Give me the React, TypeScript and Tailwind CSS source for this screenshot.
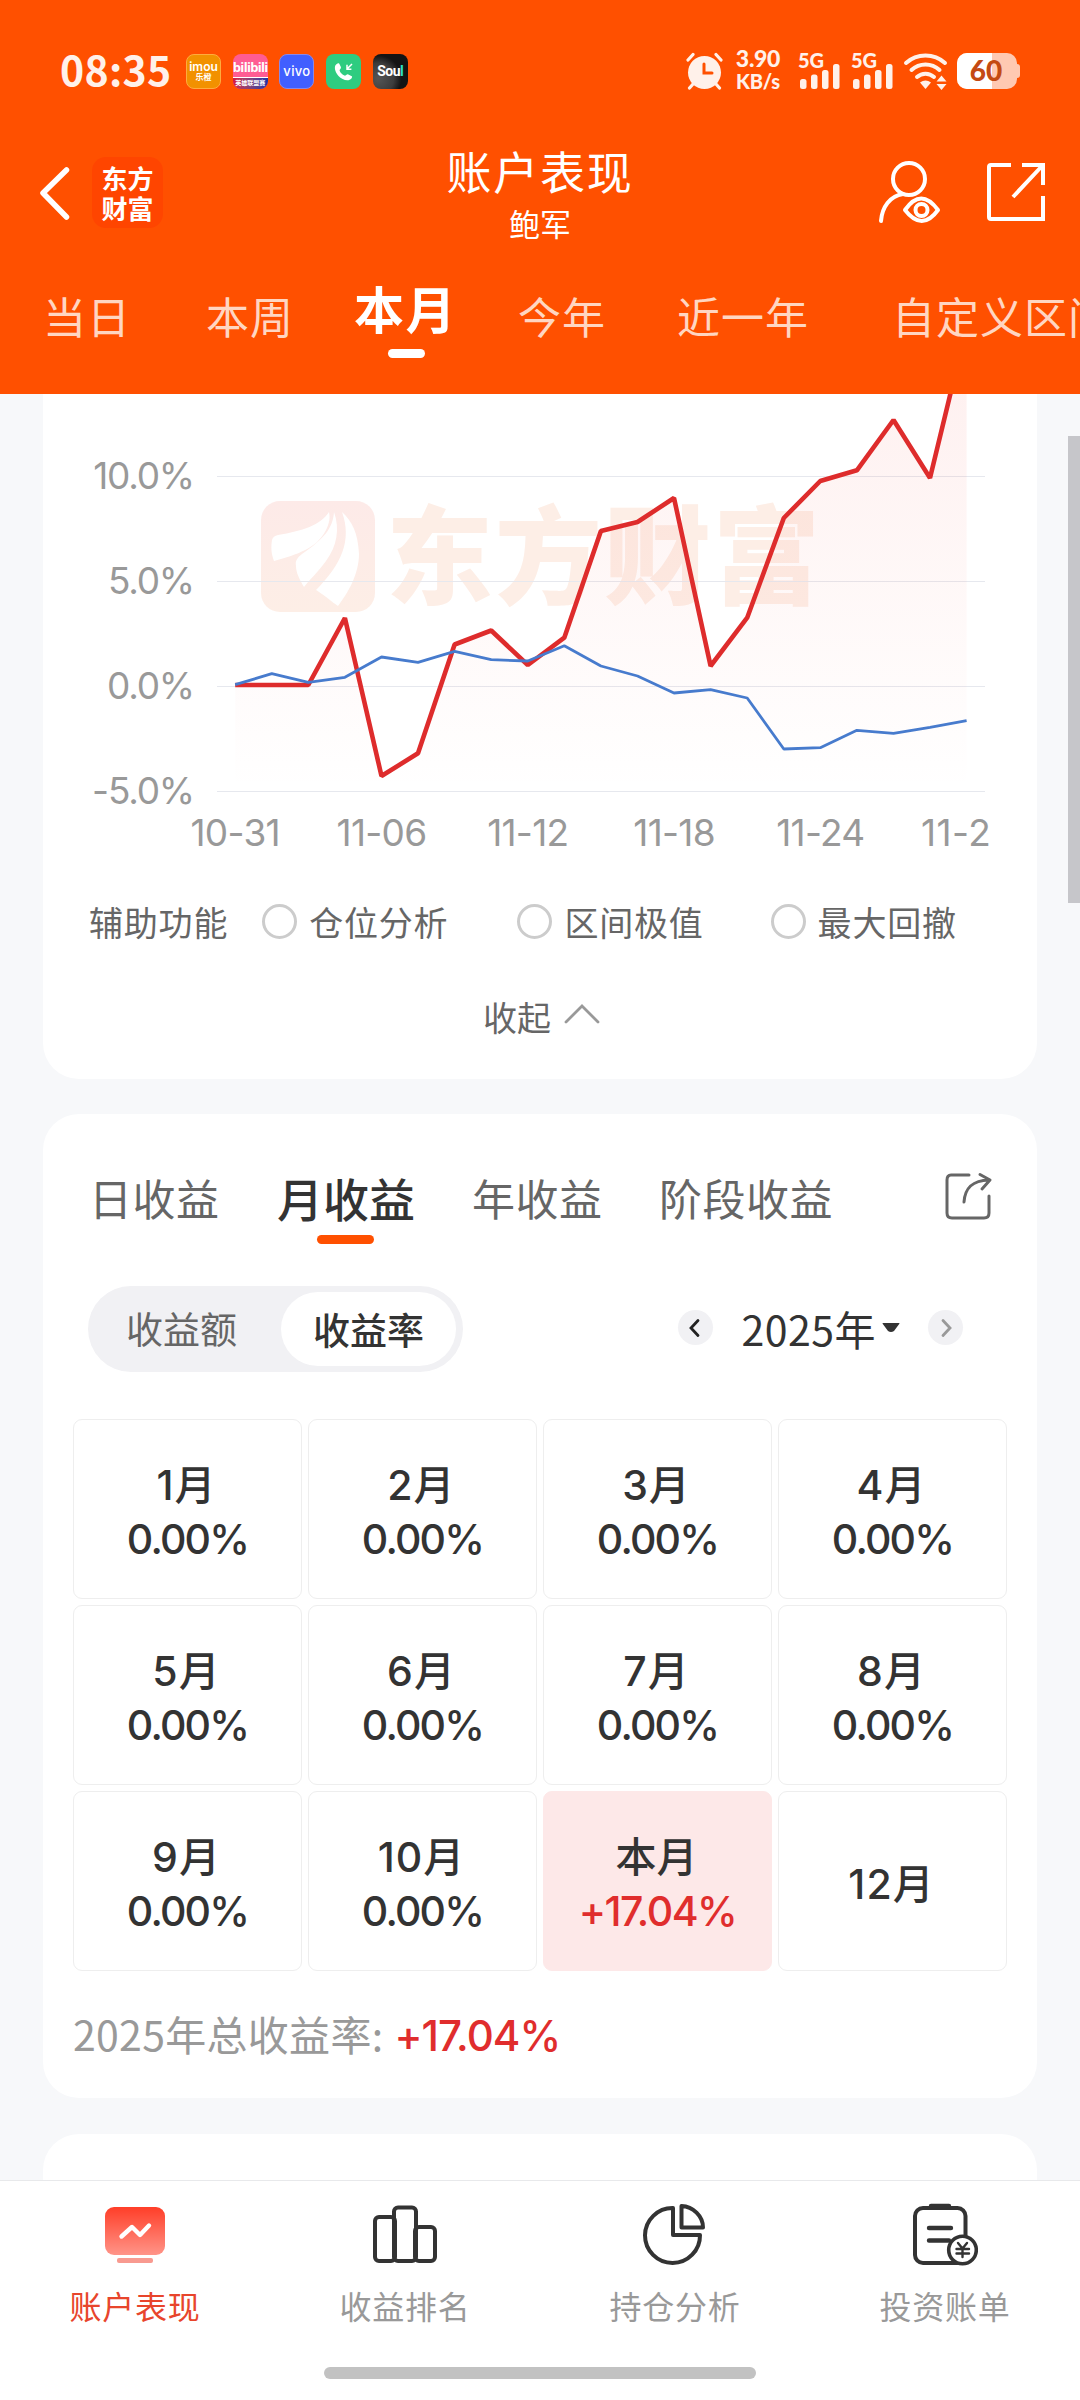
import React, { useState } from 'react';

const RED_POINTS = [685, 685, 685, 618, 776, 753.3, 644.5, 630.5, 665, 637.7, 531, 522, 498, 666, 617.7, 518, 481, 470.3, 420, 478, 327];
const BLUE_POINTS = [684.7, 673.7, 682.3, 677.3, 657, 662.3, 651.3, 659.7, 661, 645.7, 666, 676, 693, 689.7, 698, 749, 747.7, 730.3, 733.3, 727.3, 720.7];

const GRID_LINES = [
  { y: 476.5, label: '10.0%' },
  { y: 581.5, label: '5.0%' },
  { y: 686.5, label: '0.0%' },
  { y: 791.5, label: '-5.0%' },
];

const DATES = ['10-31', '11-06', '11-12', '11-18', '11-24'];

const MONTHS = ['1月', '2月', '3月', '4月', '5月', '6月', '7月', '8月', '9月', '10月', '本月', '12月'];

const toPoints = (values: number[]) => values.map((y, i) => `${(235.2 + i * 36.57).toFixed(1)},${y}`).join(' ');

const SignalBars: React.FC = () => (
  <div className="relative w-[42px] h-[38px]">
    <span className="absolute left-0 top-[-1px] text-[20px] leading-[19px] font-black font-['Lato']">5G</span>
    <svg className="absolute left-[2px] top-[12px]" width="40" height="25" fill="currentColor">
      <rect x="0" y="15" width="6.5" height="10" rx="2.5" />
      <rect x="11" y="10.5" width="6.5" height="14.5" rx="2.5" />
      <rect x="22" y="6" width="6.5" height="19" rx="2.5" />
      <rect x="33" y="0" width="6.5" height="25" rx="2.5" />
    </svg>
  </div>
);

const StatusBar: React.FC = () => (
  <div className="flex items-center h-[142px] pl-[60px] pr-[63px] text-[#fff1ea]">
    <span className="w-[126px] pb-[6px] text-[41px] leading-none font-bold tracking-[0.300px]">08:35</span>
    <div className="flex gap-[11.7px] text-white">
      <div className="w-[35px] h-[35px] rounded-[8px] bg-[#f29100] border border-[#ffab3d] flex flex-col items-center justify-center">
        <span className="text-[12px] leading-[11px] font-semibold font-['Inter']">imou</span>
        <span className="text-[8px] leading-[9px] font-bold">乐橙</span>
      </div>
      <div className="w-[35px] h-[35px] rounded-[8px] bg-[#ff5c93] overflow-hidden flex flex-col justify-end">
        <span className="text-center text-[13px] leading-[20px] font-bold tracking-[-0.700px] font-['Open_Sans']">bilibili</span>
        <span className="h-[12px] border-t border-white bg-gradient-to-r from-[#d8123f] to-[#1a2fa5] text-center text-[6px] leading-[10px] font-bold whitespace-nowrap">英雄联盟赛</span>
      </div>
      <div className="w-[35px] h-[35px] rounded-[8px] bg-[#415fff] border border-[#8a88e6] flex items-center justify-center">
        <span className="text-[13px] leading-none font-medium tracking-[0.3px] font-['Inter']">vivo</span>
      </div>
      <svg width="35" height="35" viewBox="0 0 35 35">
        <rect width="35" height="35" rx="8" fill="#2ecc80" />
        <path d="M9.3 11.5c1-1.6 3-3 4-1.800l1.600 3.200c.6 1.600-1.600 2.400-1.300 3.700.7 2.300 2.700 4.300 4.900 5 1.300.3 2.200-1.800 3.800-1.200l3.500 1.800c1 .8-.6 3-2.500 3.700-3.500 1-8-1-10.800-4-2.600-3-4.500-7.200-3.200-10.400z" fill="#fff" />
        <path d="M26 10l-5 5m0-4.200v4.400h4.400" stroke="#fff" strokeWidth="1.500" fill="none" />
      </svg>
      <div className="w-[35px] h-[35px] rounded-[8px] bg-[radial-gradient(circle_at_15%_70%,#555_0%,#3c3c3c_40%,#141414_60%)] flex items-center justify-center">
        <span className="text-[14px] leading-none font-bold tracking-[-0.500px] font-['Roboto']">Sou<span className="text-[#2de0c8]">l</span></span>
      </div>
    </div>
    <svg className="ml-auto" width="38" height="38" viewBox="0 0 38 38" fill="none" stroke="currentColor" strokeLinecap="round">
      <circle cx="18.500" cy="20.500" r="16.500" fill="currentColor" stroke="none" />
      <path d="M2 8l5-5.500M35 8l-5-5.500M3.500 36l4-4.500M33.500 36l-4-4.500" strokeWidth="3.200" />
      <path d="M18 12v9h8" stroke="#ff5000" strokeWidth="3" />
    </svg>
    <div className="ml-[10px] mr-[2px] -mt-[3px] w-[48px] flex flex-col items-center text-[23px] leading-[23px] font-black font-['Lato']">
      <span className="tracking-[-0.300px]">3.90</span>
      <span className="text-[20px] tracking-[-0.200px]">KB/s</span>
    </div>
    <div className="ml-[14px] flex gap-[11px]">
      <SignalBars />
      <SignalBars />
    </div>
    <svg className="ml-[10px] mr-[1px]" width="46" height="38" viewBox="0 0 46 38" fill="none" stroke="currentColor" strokeWidth="4" strokeLinecap="round">
      <path d="M3 11c11-10 28-10 39 0M8.500 18c8-7.500 20-7.500 28 0M14 25c5-4.500 12-4.500 17 0" />
      <path d="M17 30.500q5.500-4 11 0l-5.500 6.500z" fill="currentColor" stroke="none" />
      <path d="M38.500 23.500l5 6h-10zM38.500 38l5-6h-10z" fill="currentColor" stroke="none" />
    </svg>
    <div className="ml-[7px] relative w-[60px] h-[36px]">
      <div className="w-full h-full rounded-[10px] overflow-hidden flex bg-[#ffc9b2]">
        <div className="w-[35px] bg-white" />
      </div>
      <div className="absolute right-[-3px] top-[11px] w-[3px] h-[14px] rounded-r bg-[#ffc9b2]" />
      <span className="absolute inset-0 pr-[2px] text-center text-[28px] leading-[35px] font-black text-[#c44a12] font-['Lato']">60</span>
    </div>
  </div>
);

const TitleBar: React.FC = () => (
  <div className="flex items-start h-[126px] pt-[6px] pl-[38px] pr-[34px] text-white">
    <svg className="mt-[17px]" width="34" height="56" viewBox="0 0 34 56" fill="none" stroke="currentColor" strokeWidth="5.500" strokeLinecap="round" strokeLinejoin="round">
      <path d="M28.500 5L5 28l23.500 24" />
    </svg>
    <div className="ml-[20px] mt-[9px] w-[71px] h-[71px] rounded-[14px] bg-[#ff4500] flex items-center justify-center text-center text-[26px] leading-[30px] font-bold">
      东方<br />财富
    </div>
    <div className="flex-1 pl-[40px] -mt-[3px] flex flex-col items-center">
      <h1 className="text-[45px] leading-[52px] tracking-[1.800px]">账户表现</h1>
      <p className="text-[31px] leading-[52px]">鲍军</p>
    </div>
    <svg className="mt-[13px] mr-[45px]" width="64" height="64" viewBox="0 0 64 64" fill="none" stroke="currentColor" strokeWidth="4" strokeLinecap="round" strokeLinejoin="round">
      <circle cx="32" cy="18" r="16" />
      <path d="M4 60c1-14 9-25 22-27" />
      <path d="M28 49q16-23 33 0-16 22-33 0z" />
      <circle cx="44.500" cy="49" r="6" />
    </svg>
    <svg className="mt-[14px]" width="60" height="60" viewBox="0 0 60 60" fill="none" stroke="currentColor" strokeWidth="4">
      <path d="M25 3H5q-2 0-2 2v50q0 2 2 2h52V34M36 3h21v20M56 4L27 35" />
    </svg>
  </div>
);

const PERIODS = [
  { label: '当日', pos: 'ml-[43px]' },
  { label: '本周', pos: 'ml-[75px]' },
  { label: '本月', pos: 'ml-[60px]' },
  { label: '今年', pos: 'ml-[61px]' },
  { label: '近一年', pos: 'ml-[71px]' },
  { label: '自定义区间', pos: 'ml-[83px]' },
];

const PeriodTabs: React.FC = () => {
  const [active, setActive] = useState('本月');

  return (
    <div className="flex h-[126px] whitespace-nowrap overflow-hidden">
      {PERIODS.map(({ label, pos }) => (
        <button key={label} onClick={() => setActive(label)} className={`relative shrink-0 h-[98px] ${pos} ${active === label ? 'pb-[19px] text-[50px] tracking-[1.500px] font-bold text-white' : 'pb-[3px] text-[43px] tracking-[1px] text-[#ffd6c2]'}`}>
          {label}
          {active === label && <span className="absolute left-1/2 -ml-[18px] top-[81px] w-[37px] h-[9px] rounded-full bg-white" />}
        </button>
      ))}
    </div>
  );
};

const ProfitChart: React.FC = () => (
  <svg className="block" width="994" height="476" viewBox="43 394 994 476">
    <defs>
      <linearGradient id="area" x1="0" y1="327" x2="0" y2="791" gradientUnits="userSpaceOnUse">
        <stop offset="0" stopColor="#f54a40" stopOpacity="0.09" />
        <stop offset="1" stopColor="#f54a40" stopOpacity="0" />
      </linearGradient>
      <linearGradient id="mark" x1="0" y1="0" x2="0" y2="1">
        <stop offset="0" stopColor="#fdeae8" />
        <stop offset="1" stopColor="#fdeee6" />
      </linearGradient>
    </defs>

    {/* Watermark */}
    <rect x="261" y="501" width="114" height="111" rx="19" fill="url(#mark)" />
    <path d="M272 540q1-4 6-5c24-4 43-10 51-23 1 5 1 10-3 18-10 19-28 24-52 31-3-8-3-14-2-21zM334 512c6 17 3 34-8 49-7 10-15 17-22 26-4-7-8-14-8-21-1-5 1-8 6-12 22-15 31-26 32-42zM342 512c10 9 16 21 17 42 0 20-11 39-21 52-6-4-15-12-22-16 26-26 36-50 26-78z" fill="#fff" />
    <text x="386" y="596" fontSize="107" fontWeight="900" fill="#fdeee6" textLength="434">东方财富</text>

    {GRID_LINES.map(line => (
      <g key={line.label}>
        <line x1="217" x2="985" y1={line.y} y2={line.y} stroke="#e6e8ee" strokeWidth="1.200" />
        <text x="194" y={line.y + 12.500} textAnchor="end" fontSize="37" fill="#999" className="font-['Inter'] tracking-[-1.200px]">{line.label}</text>
      </g>
    ))}
    {DATES.map((date, i) => (
      <text key={date} x={235.2 + i * 146.3} y="845.500" textAnchor="middle" fontSize="37" fill="#999" className="font-['Inter'] tracking-[-0.700px]">{date}</text>
    ))}
    <text x="921" y="845.500" fontSize="37" fill="#999" className="font-['Inter'] tracking-[0.500px]">11-2</text>

    <polygon points={`235.2,791 ${toPoints(RED_POINTS)} 966.6,791`} fill="url(#area)" />
    <polyline points={toPoints(RED_POINTS)} fill="none" stroke="#de2c2c" strokeWidth="4.600" strokeLinejoin="bevel" />
    <polyline points={toPoints(BLUE_POINTS)} fill="none" stroke="#477bcd" strokeWidth="2.800" strokeLinejoin="bevel" />
  </svg>
);

const HELPERS = [
  { label: '仓位分析', pos: 'ml-[34px]' },
  { label: '区间极值', pos: 'ml-[69px]' },
  { label: '最大回撤', pos: 'ml-[67px]' },
];

const ChartCard: React.FC = () => (
  <section className="h-[685px] rounded-b-[36px] bg-white text-[34px] text-[#666]">
    <ProfitChart />
    <div className="flex items-center h-[102px] pl-[46px] tracking-[0.800px]">
      <span>辅助功能</span>
      {HELPERS.map(({ label, pos }) => (
        <label key={label} className={`flex items-center gap-[12px] ${pos}`}>
          <span className="w-[35px] h-[35px] rounded-full border-[3px] border-[#ccc]" />
          {label}
        </label>
      ))}
    </div>
    <button className="flex items-center mx-auto mt-[19px] h-[50px] pl-[3px]">
      收起
      <svg className="ml-[13px] mb-[4px]" width="36" height="22" viewBox="0 0 36 22" fill="none" stroke="#999" strokeWidth="2.800" strokeLinecap="round">
        <path d="M2 19L18 3l16 16" />
      </svg>
    </button>
  </section>
);

const MonthCell: React.FC<{ month: string }> = ({ month }) => {
  const current = month === '本月';
  return (
    <div className={`flex flex-col items-center justify-center h-[180px] pt-[6px] rounded-[9px] border text-[41px] leading-[54px] font-medium ${current ? 'bg-[#fde8e8] border-[#fde8e8]' : 'border-[#eee]'}`}>
      <span className={current ? '-ml-[2px]' : '-ml-[2px] tracking-[1px]'}>{month}</span>
      {month !== '12月' && (
        <span className={current ? 'tracking-[-1.500px] text-[#e02d2d]' : 'tracking-[-1.800px]'}>{current ? '+17.04%' : '0.00%'}</span>
      )}
    </div>
  );
};

const IncomeCard: React.FC = () => (
  <section className="mt-[35px] h-[984px] rounded-[36px] bg-white text-[#333] overflow-hidden">
    {/* Income tabs */}
    <div className="flex items-center h-[90px] mt-[38px] pl-[46px] pr-[44px] text-[43px] text-[#666]">
      <span className="w-[188px] tracking-[0.500px]">日收益</span>
      <span className="relative w-[195px] text-[46px] font-medium text-[#333]">
        月收益
        <span className="absolute left-[40px] bottom-[-12px] w-[57px] h-[9px] rounded-full bg-[#ff5000]" />
      </span>
      <span className="w-[187px] tracking-[0.500px]">年收益</span>
      <span className="tracking-[0.500px]">阶段收益</span>
      <svg className="ml-auto mb-[3px]" width="49" height="49" viewBox="0 0 49 49" fill="none" stroke="currentColor" strokeWidth="3" strokeLinecap="round" strokeLinejoin="round">
        <path d="M25 4H7Q3 4 3 9v33q0 5 5 5h32q5 0 5-5V25" />
        <path d="M20 31C21 17 28 9.500 45 9M36 3.500L46 9l-8 9" />
      </svg>
    </div>

    {/* Unit switch and year picker */}
    <div className="flex items-center mt-[44px] pl-[45px] pr-[74px]">
      <div className="flex items-center w-[375px] h-[86px] rounded-full bg-[#f1f1f4] text-[37px]">
        <span className="w-[193px] pl-[38px] text-[#666]">收益额</span>
        <span className="w-[175px] h-[74px] rounded-full bg-white text-center leading-[74px] font-medium">收益率</span>
      </div>
      <button className="ml-auto w-[35px] h-[35px] mb-[3px] rounded-full bg-[#f1f1f4] flex items-center justify-center">
        <svg className="-ml-[2px]" width="14" height="20" viewBox="0 0 14 20" fill="none" stroke="#222" strokeWidth="2.800" strokeLinecap="round"><path d="M10 2.500L3 10l7 7.500" /></svg>
      </button>
      <span className="ml-[28px] mb-[3px] text-[41px] leading-[50px] tracking-[0.500px]">2025年</span>
      <svg className="ml-[6px] mb-[3px]" width="18" height="9" fill="#333"><path d="M1 0h16q1 0 0 1.200L12 8q-3 2-6 0L1 1.200Q0 0 1 0z" /></svg>
      <button className="ml-[28px] w-[35px] h-[35px] mb-[3px] rounded-full bg-[#f1f1f4] flex items-center justify-center">
        <svg width="14" height="20" viewBox="0 0 14 20" fill="none" stroke="#999" strokeWidth="2.800" strokeLinecap="round"><path d="M4 2.500L11 10l-7 7.500" /></svg>
      </button>
    </div>

    <div className="grid grid-cols-4 gap-[6px] mt-[47px] mx-[30px] font-['Inter','Noto_Sans_CJK_SC',sans-serif]">
      {MONTHS.map(month => <MonthCell key={month} month={month} />)}
    </div>

    <p className="mt-[32px] pl-[30px] text-[41px] leading-[60px] tracking-[0.300px] text-[#999]">
      2025年总收益率:<span className="ml-[11px] text-[42px] tracking-[-0.900px] font-medium text-[#e02d2d] font-['Inter']">+17.04%</span>
    </p>
  </section>
);

const NavIcon: React.FC<{ index: number }> = ({ index }) => {
  if (index === 0) {
    return (
      <svg width="66" height="66" viewBox="0 0 66 66" fill="none">
        <defs>
          <linearGradient id="screen" x1="0" y1="0" x2="0" y2="1">
            <stop offset="0" stopColor="#ff3e28" />
            <stop offset="1" stopColor="#ff9488" />
          </linearGradient>
        </defs>
        <rect x="3" y="5" width="60" height="48" rx="9" fill="url(#screen)" />
        <path d="M19.500 34.500L30 25l8 8 9-9.500" stroke="#fff" strokeWidth="4.400" strokeLinecap="round" strokeLinejoin="round" />
        <rect x="15" y="56" width="36" height="5" rx="2" fill="#f89a90" />
      </svg>
    );
  }
  return (
    <svg width="66" height="66" viewBox="0 0 66 66" fill="none" stroke="#333" strokeWidth="4" strokeLinejoin="round" strokeLinecap="round">
      {index === 1 && (
        <>
          <rect x="3" y="15" width="20" height="44" rx="4" />
          <rect x="22" y="5.500" width="22" height="53.500" rx="4" />
          <rect x="43" y="25" width="20" height="34" rx="4" />
        </>
      )}
      {index === 2 && (
        <>
          <path d="M31 6A27.500 27.500 0 1 0 58 33H31z" />
          <path d="M39.500 4v21.500H61C61 14 51 4.500 39.500 4z" />
        </>
      )}
      {index === 3 && (
        <>
          <rect x="3" y="6" width="50.500" height="55" rx="8" />
          <path d="M19 4h18M17 26h22M17 38.500h20" strokeWidth="4.400" />
          <circle cx="50.500" cy="48" r="13.800" fill="#fff" strokeWidth="3.600" />
          <path d="M46 41l4.500 5.500L55 41M50.500 47v8M44.500 47h12.500M44.500 51.500h12.500" strokeWidth="2.400" />
        </>
      )}
    </svg>
  );
};

const BottomNav: React.FC = () => (
  <nav className="relative z-10 h-[220px] border-t border-[#e8e9eb] bg-white">
    <div className="grid grid-cols-4 h-[186px]">
      {['账户表现', '收益排名', '持仓分析', '投资账单'].map((label, i) => (
        <a key={label} className={`flex flex-col items-center pt-[21px] text-[32px] leading-[48px] tracking-[0.800px] ${i === 0 ? 'text-[#e8452c]' : 'text-[#999]'}`}>
          <NavIcon index={i} />
          <span className="mt-[13px]">{label}</span>
        </a>
      ))}
    </div>
    <div className="mx-auto w-[432px] h-[12px] rounded-full bg-[#c2c2c2]" />
  </nav>
);

export default function App() {
  return (
    <div className="relative flex flex-col w-[1080px] h-[2400px] overflow-hidden bg-[#f7f8fa] font-['Noto_Sans_CJK_SC',sans-serif]">
      <header className="h-[394px] shrink-0 bg-[#ff5000]">
        <StatusBar />
        <TitleBar />
        <PeriodTabs />
      </header>
      <main className="h-[1786px] shrink-0 overflow-hidden px-[43px]">
        <ChartCard />
        <IncomeCard />
        <section className="mt-[36px] h-[300px] rounded-t-[36px] bg-white" />
      </main>
      <BottomNav />
      {/* Scrollbar thumb */}
      <div className="absolute right-0 top-[436px] w-[12px] h-[467px] bg-[#c6c6ca]" />
    </div>
  );
}
